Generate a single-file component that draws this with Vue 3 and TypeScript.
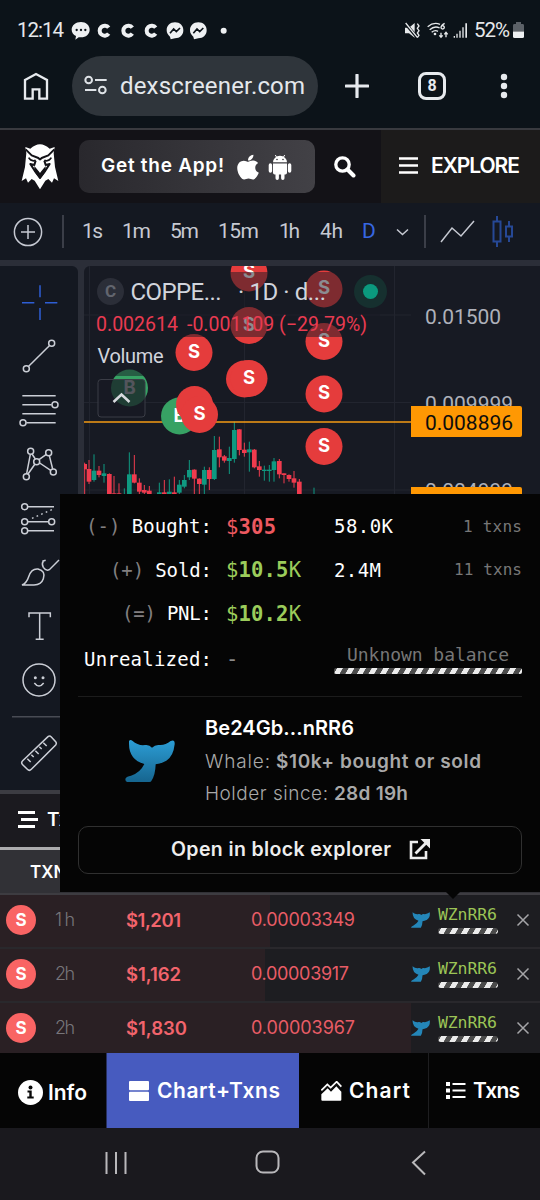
<script setup lang="ts">
import type { Directive } from 'vue'

// Adjusts tracking so that a label fills the given width in pixels.
const vFit: Directive<HTMLElement, number> = {
  mounted(el, { value }) {
    const count = (el.textContent ?? '').length
    if (count < 2) return
    const spacing = (value - el.getBoundingClientRect().width) / (count - 1)
    el.style.letterSpacing = `${spacing}px`
    el.style.marginRight = `${-spacing}px`
  },
}

interface Trade { age: string; usd: string; usdWidth: number; price: string; priceWidth: number; fill: number }
const trades: Trade[] = [
  { age: '1h', usd: '$1,201', usdWidth: 55, price: '0.00003349', priceWidth: 104, fill: 270 },
  { age: '2h', usd: '$1,162', usdWidth: 55, price: '0.00003917', priceWidth: 98, fill: 265 },
  { age: '2h', usd: '$1,830', usdWidth: 61, price: '0.00003967', priceWidth: 104, fill: 411 },
]

const intervals = [
  { label: '1s', width: 21, gap: 19 },
  { label: '1m', width: 29, gap: 19 },
  { label: '5m', width: 29, gap: 19 },
  { label: '15m', width: 41, gap: 20 },
  { label: '1h', width: 21, gap: 20 },
  { label: '4h', width: 23, gap: 19 },
]

// Candles: x, high, low, body top, body bottom, rising
type Candle = [number, number, number, number, number, boolean]
const candles: Candle[] = [
  [254, 608, 705, 612, 628, false], [267, 600, 672, 627, 665, false], [282, 583, 665, 632, 660, true],
  [297, 618, 652, 632, 645, false], [312, 612, 668, 640, 648, true], [328, 640, 705, 642, 705, false],
  [342, 648, 705, 700, 705, false], [357, 670, 705, 700, 705, false], [373, 685, 705, 703, 705, true],
  [388, 577, 705, 643, 705, true], [403, 585, 670, 643, 668, false], [418, 655, 705, 668, 695, false],
  [433, 675, 705, 690, 698, false], [448, 678, 705, 692, 705, false], [478, 668, 705, 697, 705, true],
  [493, 660, 705, 697, 702, false], [508, 658, 705, 695, 702, true], [523, 650, 705, 697, 702, false],
  [538, 660, 705, 674, 698, true], [553, 645, 685, 660, 680, true], [568, 600, 660, 630, 652, true],
  [583, 628, 705, 629, 656, false], [598, 655, 705, 656, 672, false], [613, 620, 705, 630, 674, true],
  [628, 622, 690, 630, 657, false], [643, 528, 660, 570, 657, true], [658, 530, 622, 568, 592, false],
  [673, 585, 608, 589, 602, false], [688, 560, 642, 594, 603, true], [703, 485, 608, 510, 597, true],
  [718, 507, 586, 508, 570, false], [733, 548, 590, 569, 579, false], [748, 545, 635, 568, 577, true],
  [763, 567, 625, 569, 622, false], [778, 603, 650, 619, 630, false], [793, 617, 662, 629, 633, true],
  [808, 615, 665, 629, 633, true], [822, 594, 665, 604, 630, true], [838, 597, 655, 603, 643, false],
  [852, 640, 670, 640, 645, false], [867, 643, 665, 645, 657, false], [882, 633, 683, 655, 668, false],
  [898, 657, 705, 665, 705, false], [942, 683, 705, 703, 705, true],
]

const sells = [
  [249, 273], [249, 325.5], [194, 352.5], [249, 378.5],
  [324, 289], [324, 341.5], [324, 394], [324, 446.5],
]
</script>

<template>
  <div class="phone">
    <header class="browser">
      <div class="status">
        <span v-fit="47" class="clock">12:14</span>
        <svg class="notices" width="160" height="24" viewBox="210 57 480 72">
          <g fill="#eef0f2">
            <path d="M243 66c15 0 26 10 26 23s-11 23-26 23l-7 0-10 7 2-11c-8-4-13-11-13-19 0-13 12-23 28-23z" />
            <path d="M525 67c15 0 25 10 25 24s-10 24-25 24l-13 3-2-8c-6-5-10-11-10-19 0-14 10-24 25-24zM595 67c15 0 25 10 25 24s-10 24-25 24l-13 3-2-8c-6-5-10-11-10-19 0-14 10-24 25-24z" />
            <circle cx="671" cy="92" r="9" />
          </g>
          <g fill="#0c1319"><circle cx="230" cy="90" r="3.5" /><circle cx="243" cy="90" r="3.5" /><circle cx="256" cy="90" r="3.5" /></g>
          <g fill="none" stroke="#eef0f2" stroke-width="12">
            <path d="M326 83a15 15 0 1 0 0 18M397 83a15 15 0 1 0 0 18M467 83a15 15 0 1 0 0 18" />
          </g>
          <path d="M510 100l11-13 8 8 11-11M580 100l11-13 8 8 11-11" fill="none" stroke="#0c1319" stroke-width="5" />
        </svg>
        <svg class="signals" width="66" height="24" viewBox="402 57 198 72">
          <g fill="#e6e8ea">
            <path d="M405 83h12l17-14v44l-17-13h-12z" />
            <path d="M551 108h4v5h-4zM559 101h4v12h-4zM568 92h4v21h-4zM577 82h4v31h-4zM586 70h5v43h-5z" />
          </g>
          <path d="M407 71l35 42" stroke="#0c1319" stroke-width="9" />
          <path d="M407 69l35 43M442 71l5 7-5 7 5 7-5 7 5 7-5 7" fill="none" stroke="#e6e8ea" stroke-width="4" />
          <g fill="none" stroke="#e6e8ea" stroke-width="4">
            <path d="M473 80q18-15 37-7M479 89q15-13 30-5M485 97q10-8 19-3M513 98v13m-5-5l5 6 5-6M528 112V98m-5 5l5-6 5 6" />
            <path d="M524 70q-11 5-11 13a5 5 0 1 0 2-5" />
          </g>
          <circle cx="495" cy="102" r="4" fill="#e6e8ea" />
        </svg>
        <span v-fit="36" class="battery-text">52%</span>
        <svg class="battery" width="12" height="17" viewBox="0 0 12 17">
          <path d="M3 0h5v2h2q1 0 1 1.500v6H0v-6Q0 2 1 2h2z" fill="#5c6167" />
          <path d="M0 9.500h11v5q0 1.500-1.500 1.500h-8Q0 16 0 14.500z" fill="#eef0f2" />
        </svg>
      </div>
      <div class="address">
        <svg class="home" width="28" height="30" viewBox="66 213 84 90">
          <path d="M75 240l33-18 33 18v56h-23v-28H98v28H75z" fill="none" stroke="#e7eaee" stroke-width="7" />
        </svg>
        <div class="omnibox">
          <svg width="24" height="22" viewBox="253 227 72 66">
            <g fill="none" stroke="#dfe3e7" stroke-width="6">
              <circle cx="267" cy="242" r="10" /><circle cx="308" cy="272" r="10" />
              <path d="M286 242h35M256 272h34" />
            </g>
          </svg>
          <span v-fit="185" class="url">dexscreener.com</span>
        </div>
        <svg class="plus" width="24" height="24" viewBox="0 0 24 24"><path d="M12 1v22M1 12h22" stroke="#e7eaee" stroke-width="3.200" stroke-linecap="round" /></svg>
        <div class="tab-count">8</div>
        <svg class="kebab" width="8" height="26" viewBox="0 0 8 26" fill="#e7eaee"><circle cx="4" cy="4" r="3.200" /><circle cx="4" cy="13" r="3.200" /><circle cx="4" cy="22" r="3.200" /></svg>
      </div>
    </header>

    <div class="site">
      <svg class="owl" width="38" height="46" viewBox="65 62 114 138">
        <path fill="#fff" d="M78 71l15 5q29-27 58 0l15-5-3 18 4 42 10 42-13-8-6 13-11-11-9 5-16 26-16-26-9-5-11 11-6-13-13 8 10-42 4-42z" />
        <g fill="none" stroke="#131217" stroke-width="6" stroke-linejoin="round">
          <path d="M79 78l18 18 20 8 5 5 5-5 20-8 18-18" />
          <path d="M88 103q8 13 21 8M156 103q-8 13-21 8" stroke-width="5" />
          <path d="M109 112l-4 13-12-3 13 20 16 22 16-22 13-20-12 3-4-13" />
        </g>
        <path d="M105 128l17 20 17-20v17l-17 22-17-22z" fill="#131217" />
        <path d="M122 110l10 19-10 19-10-19z" fill="#fff" />
      </svg>
      <div class="app-button">
        <span v-fit="123">Get the App!</span>
        <svg width="22" height="26" viewBox="0 20 384 470" preserveAspectRatio="none"><path fill="#fff" d="M318.700 268.700c-.2-36.700 16.400-64.400 50-84.800-18.800-26.900-47.200-41.700-84.700-44.600-35.500-2.800-74.300 20.700-88.500 20.700-15 0-49.400-19.700-76.400-19.700C63.300 141.200 4 184.800 4 273.500q0 39.300 14.400 81.200c12.800 36.700 59 126.700 107.200 125.200 25.200-.6 43-17.900 75.800-17.900 31.800 0 48.300 17.900 76.400 17.900 48.600-.7 90.400-82.500 102.600-119.300-65.200-30.700-61.700-90-61.700-91.900zm-56.600-164.200c27.300-32.400 24.800-61.900 24-72.500-24.100 1.400-52 16.400-67.900 34.900-17.500 19.800-27.800 44.300-25.600 71.900 26.100 2 49.900-11.400 69.500-34.300z" /></svg>
        <svg class="droid" width="24" height="26" viewBox="0 0 24 26" fill="#fff">
          <path d="M5 8.300A7 6.600 0 0 1 19 8.300zM5 9.500h14v9.300q0 1.700-1.700 1.700H6.700Q5 20.500 5 18.800z" />
          <path d="M2.400 11v6M21.600 11v6M9.200 20v4.200M14.800 20v4.200" stroke="#fff" stroke-width="3.400" stroke-linecap="round" />
          <path d="M8.500 3L7.300 1M15.500 3l1.200-2" stroke="#fff" /><circle cx="9" cy="5.500" r=".8" fill="#39383d" /><circle cx="15" cy="5.500" r=".8" fill="#39383d" />
        </svg>
      </div>
      <svg class="search" width="22" height="22" viewBox="0 0 22 22"><circle cx="8.500" cy="8.500" r="6.700" fill="none" stroke="#fff" stroke-width="3.300" /><path d="M13.500 13.500l6 6" stroke="#fff" stroke-width="4" stroke-linecap="round" /></svg>
      <div class="explore">
        <svg width="19" height="17" viewBox="0 0 19 17"><path d="M0 1.500h19M0 8.500h19M0 15.500h19" stroke="#fff" stroke-width="2.600" /></svg>
        <span v-fit="89">EXPLORE</span>
      </div>
    </div>

    <nav class="intervals">
      <svg class="add" width="30" height="30" viewBox="0 0 30 30"><circle cx="15" cy="15" r="13.600" /><path d="M15 8v14M8 15h14" /></svg>
      <i class="rule"></i>
      <span v-for="i in intervals" :key="i.label" class="slot" :style="{ width: `${i.width + i.gap}px` }"><span v-fit="i.width">{{ i.label }}</span></span>
      <span class="day">D</span>
      <svg class="chevron" width="13" height="8" viewBox="0 0 13 8"><path d="M1 1.500l5.500 5 5.500-5" /></svg>
      <i class="rule second"></i>
      <svg class="zig" width="35" height="24" viewBox="0 0 35 24"><path d="M1 22L12 8l9 8L34 1" /></svg>
      <svg class="sticks" width="22" height="31" viewBox="0 0 22 31"><path d="M5 0v5M5 26v5M1.500 5.500h7v20h-7zM17 5v5M17 21v5M14 10.500h6v10h-6z" /></svg>
    </nav>

    <main class="work">
      <aside class="tools">
        <svg width="78" height="63" viewBox="0 18 234 189"><path d="M120 76v36M120 144v36M66 128h37M135 128h37" class="blue" /></svg>
        <svg width="78" height="54" viewBox="0 207 234 162"><circle cx="155" cy="250" r="9" /><circle cx="79" cy="326" r="9" /><path d="M148 257l-62 62" /></svg>
        <svg width="78" height="54" viewBox="0 369 234 162"><path d="M67 407h100M67 434h88M67 461h100M79 488h88" /><circle cx="165" cy="434" r="9" /><circle cx="69" cy="488" r="9" /></svg>
        <svg width="78" height="54" viewBox="0 531 234 162"><circle cx="92" cy="574" r="9" /><circle cx="146" cy="578" r="9" /><circle cx="110" cy="605" r="9" /><circle cx="79" cy="650" r="9" /><circle cx="160" cy="636" r="9" /><path d="M91 583l-11 58M84 642l21-30M96 582l10 15M117 599l22-16M119 609l33 22M148 587l10 40" /></svg>
        <svg width="78" height="54" viewBox="0 33 234 162"><circle cx="74" cy="80" r="9" /><circle cx="74" cy="125" r="9" /><circle cx="155" cy="125" r="9" /><circle cx="74" cy="152" r="9" /><path d="M83 80h79M83 125h63M83 152h79" /><path d="M96 115l64-28" stroke-dasharray="5 10" /></svg>
        <svg width="78" height="55" viewBox="0 195 234 165"><path d="M66 315q14-6 20-25 8-25 28-23 24 6 16 29-6 18-28 19zM130 243q-6 9 0 19 8 12 18 7l29-29M127 244l10-3" /></svg>
        <svg width="78" height="54" viewBox="0 360 234 162"><path d="M87 412v-13h64v13M119 399v78M107 478h24" /></svg>
        <svg width="78" height="56" viewBox="0 522 234 168"><circle cx="117" cy="600" r="48" /><path d="M103 609q14 18 28 0" /><g class="dots"><circle cx="106" cy="593" r="4.500" /><circle cx="129" cy="593" r="4.500" /></g></svg>
        <svg width="78" height="80" viewBox="0 60 234 240"><path d="M36 80h198" class="faint" /><path d="M144 140q5-4 10 1l13 14q4 5 0 10l-73 73q-6 6-12 0l-14-14q-6-6 0-12zM82 206l10 10M94 194l7 7M106 182l10 10M118 170l7 7M130 158l10 10" /></svg>
      </aside>
      <section class="chart">
        <svg width="456" height="228" viewBox="84 266 456 228">
          <path d="M89.500 266v228M244.500 266v228M394.500 266v228M84 315h327M84 402.500h327M84 490h327" stroke="#22252f" />
          <g transform="translate(0 260) scale(.33333)">
            <g v-for="c in candles" :key="c[0]" :fill="c[5] ? '#0f9981' : '#f03b4e'">
              <rect :x="c[0] - 1.500" :y="c[1]" width="3" :height="c[2] - c[1]" />
              <rect :x="c[0] - 7" :y="c[3]" width="14" :height="c[4] - c[3]" />
            </g>
          </g>
          <path d="M84 422h327" stroke="#f49b14" stroke-width="1.500" />
          <circle cx="129.500" cy="388" r="18.500" fill="#37a264" />
          <text x="129.500" y="394" class="mark">B</text>
          <circle cx="179.500" cy="416" r="18.500" fill="#37a264" />
          <text x="179.500" y="422" class="mark">B</text>
          <circle cx="194.500" cy="404.500" r="18.500" fill="#e53c3c" />
          <circle cx="199.500" cy="414.500" r="18.500" fill="#e53c3c" />
          <text x="199.500" y="420" class="mark">S</text>
          <circle cx="244.500" cy="379" r="18.500" fill="#e53c3c" />
          <g v-for="(s, n) in sells" :key="n">
            <circle :cx="s[0]" :cy="s[1]" r="18.500" fill="#e53c3c" />
            <text :x="s[0]" :y="s[1] + 5" class="mark">S</text>
          </g>
          <path d="M98 272h282v65H166v39H98z" fill="#171a23" opacity=".5" />
          <rect x="98" y="379.500" width="47" height="37.500" rx="3" fill="#171a23" fill-opacity=".74" stroke="#3b3d46" />
          <path d="M113.500 402l8-7.500 8 7.500" fill="none" stroke="#d7d9de" stroke-width="2.500" />
          <circle cx="110.500" cy="291.500" r="13.500" fill="#2b2e38" />
          <text x="110.500" y="297" class="coin">C</text>
          <g fill="#d1d4dc" font-size="24">
            <text x="130.500" y="300" textLength="91">COPPE...</text>
            <text x="238" y="300" textLength="88">· 1D · d...</text>
          </g>
          <g fill="#e93b51" font-size="19.500">
            <text x="96" y="330.500" textLength="82">0.002614</text>
            <text x="187" y="330.500" textLength="180">-0.001109 (−29.79%)</text>
          </g>
          <text x="97.500" y="363" font-size="20" fill="#d1d4dc" textLength="66">Volume</text>
          <circle cx="370.500" cy="291.500" r="16.500" fill="#16302f" /><circle cx="370.500" cy="291.500" r="7.500" fill="#0b9a7e" />
          <g font-size="21" fill="#aeb1ba">
            <text x="425" y="323.500" textLength="76">0.01500</text>
            <text x="425" y="410.500" textLength="88">0.009999</text>
            <text x="425" y="498" textLength="88">0.004999</text>
          </g>
          <path d="M411 406h109q2 0 2 2v27q0 2-2 2H411zM411 487h109q2 0 2 2v5H411z" fill="#ff9803" />
          <text x="425" y="430" font-size="21" fill="#0d0d0d" textLength="88">0.008896</text>
        </svg>
      </section>
    </main>

    <section class="txn-tab">
      <svg width="20" height="17" viewBox="0 0 20 17"><path d="M0 1.500h17M3 8.500h17M0 15.500h17" stroke="#fff" stroke-width="3" /></svg>
      <span>Txns</span>
    </section>
    <div class="txn-head">TXN</div>
    <section class="trades">
      <div v-for="t in trades" :key="t.usd" class="trade">
        <i class="fill" :style="{ width: `${t.fill}px` }"></i>
        <span class="badge">S</span>
        <span class="age"><span v-fit="20">{{ t.age }}</span></span>
        <span class="usd"><span v-fit="t.usdWidth">{{ t.usd }}</span></span>
        <span class="price"><span v-fit="t.priceWidth">{{ t.price }}</span></span>
        <svg class="fluke" width="19" height="16" viewBox="375 150 150 130" preserveAspectRatio="none"><path d="M387 153q24 20 48 14 13-2 21 8 9-9 21-8 24 3 46-14 6 44-24 61-19 8-33 11-1 33-13 52h-77q-1-9 19-18 30-16 39-37-47-13-47-69z" fill="#2486b8" /></svg>
        <div class="wallet"><span v-fit="59">WZnRR6</span><i class="stripe"></i></div>
        <svg class="close" width="14" height="14" viewBox="0 0 14 14"><path d="M1.500 1.500l11 11m0-11l-11 11" stroke="#a5a5a8" stroke-width="1.500" /></svg>
      </div>
    </section>

    <nav class="views">
      <div class="view info">
        <svg width="25" height="25" viewBox="0 0 25 25"><circle cx="12.500" cy="12.500" r="12.500" fill="#fff" /><path d="M9.500 10.500h4.200v6h2v2H9.300v-2h2v-4H9.500z" fill="#080808" /><circle cx="12.500" cy="7.500" r="2" fill="#080808" /></svg>
        <span v-fit="39">Info</span>
      </div>
      <div class="view active">
        <svg width="20" height="20" viewBox="0 0 20 20" fill="#fff"><rect width="20" height="9.200" rx="1" /><rect y="10.800" width="20" height="9.200" rx="1" /></svg>
        <span v-fit="123">Chart+Txns</span>
      </div>
      <div class="view charted">
        <svg width="21" height="20" viewBox="154 601 63 60"><path d="M155 657v-16l19-18 10 10 16-16 15 16v24q0 3-3 3h-54q-3 0-3-3z" fill="#fff" /><path d="M155 631l18-18 10 10 18-18 14 15" fill="none" stroke="#131313" stroke-width="10" /><path d="M155 629l18-18 10 10 18-18 14 15" fill="none" stroke="#fff" stroke-width="5" /></svg>
        <span v-fit="61">Chart</span>
      </div>
      <div class="view list">
        <svg width="20" height="17" viewBox="0 0 20 17" fill="#fff"><path d="M0 0h4v4H0zM0 6.500h4v4H0zM0 13h4v4H0zM6.500 1h13v2h-13zM6.500 7.500h13v2h-13zM6.500 14h13v2h-13z" /></svg>
        <span v-fit="47">Txns</span>
      </div>
    </nav>
    <footer class="system">
      <svg width="22" height="24" viewBox="0 0 22 24"><path d="M1.500 1v22M11 1v22M20.500 1v22" /></svg>
      <svg width="25" height="25" viewBox="0 0 25 25"><rect x="1.500" y="1.500" width="22" height="21" rx="6.500" /></svg>
      <svg width="15" height="26" viewBox="0 0 15 26"><path d="M14 1.500L2 12.500l12 12" /></svg>
    </footer>

    <aside class="popup">
      <div class="line l1"><span class="name"><span v-fit="126"><em>(-)</em> Bought:</span></span><span class="value red"><span v-fit="50">$<b>305</b></span></span><span class="amount"><span v-fit="59">58.0K</span></span><span class="count" v-fit="59">1 txns</span></div>
      <div class="line l2"><span class="name"><span v-fit="102"><em>(+)</em> Sold:</span></span><span class="value green"><span v-fit="75">$<b>10.5</b>K</span></span><span class="amount"><span v-fit="47">2.4M</span></span><span class="count" v-fit="68">11 txns</span></div>
      <div class="line l3"><span class="name"><span v-fit="90"><em>(=)</em> PNL:</span></span><span class="value green"><span v-fit="75">$<b>10.2</b>K</span></span></div>
      <div class="line l4"><span class="name"><span v-fit="128">Unrealized:</span></span><span class="value dash">-</span><div class="balance"><span v-fit="162">Unknown balance</span><i class="stripe"></i></div></div>
      <div class="holder">
        <svg width="50" height="44" viewBox="375 149 150 132">
          <defs><linearGradient id="sea" x1="0" y1="0" x2="0" y2="1"><stop offset="0" stop-color="#2c9ed6" /><stop offset="1" stop-color="#16658f" /></linearGradient></defs>
          <path d="M387 155q4-6 10-1 18 16 38 13 13-2 21 8 9-9 21-8 18 2 35-12 13-6 12 10-4 37-25 49-16 9-32 11-1 33-13 50-1 3-6 3h-66q-8-2-5-11 3-6 16-8 28-9 40-35-46-13-46-61z" fill="url(#sea)" />
        </svg>
        <div class="facts">
          <strong v-fit="149">Be24Gb...nRR6</strong>
          <div><span v-fit="65">Whale:</span> <b v-fit="205">$10k+ bought or sold</b></div>
          <div><span v-fit="123">Holder since:</span> <b v-fit="74">28d 19h</b></div>
        </div>
      </div>
      <div class="explorer">
        <span v-fit="220">Open in block explorer</span>
        <svg width="21" height="21" viewBox="0 0 21 21"><path d="M9 3H2v16h15v-7" fill="none" stroke="#eee" stroke-width="2.600" /><path d="M6.500 14.500L18 3" stroke="#eee" stroke-width="2.800" /><path d="M11.500 0H21v9.500z" fill="#eee" /></svg>
      </div>
      <i class="pointer"></i>
    </aside>
  </div>
</template>

<style>
html, body { background: #1a191e; }
</style>

<style scoped>
.phone { position: relative; width: 540px; height: 1200px; overflow: hidden; font-family: Inter, sans-serif; color: #fff; background: #1a191e; line-height: 1; }
.phone * { box-sizing: border-box; }
span, b, strong { white-space: nowrap; }
svg { display: block; flex: none; }
svg text { font-family: Roboto, sans-serif; }
.browser { height: 128px; background: #0c1319; }
.status { height: 42px; display: flex; padding: 19px 0 0 17px; font-family: Roboto, sans-serif; font-size: 20.500px; color: #e6e8ea; align-items: center; }
.clock, .battery-text { flex: none; }
.notices { margin-left: 6px; }
.signals { margin-left: 174px; }
.battery-text { margin-left: 4px; }
.battery { margin-left: 3px; }
.address { height: 86px; display: flex; align-items: center; padding: 2px 0 0 22px; }
.omnibox { width: 246px; height: 60px; margin-left: 22px; border-radius: 30px; background: #2f353b; display: flex; align-items: center; padding-left: 12px; gap: 12px; }
.url { font: 24px/1 Roboto, sans-serif; color: #e4e8ec; }
.plus { margin-left: 27px; }
.tab-count { width: 28px; height: 28px; margin-left: 49px; border: 3px solid #e7eaee; border-radius: 8px; font: bold 16px/22px Roboto, sans-serif; color: #e7eaee; text-align: center; }
.kebab { margin-left: 54px; }
.site { height: 75px; border-top: 2px solid #393a3f; background: #131217; display: flex; align-items: center; padding-left: 21px; }
.app-button { width: 236px; height: 53px; margin-left: 20px; border-radius: 10px; background: linear-gradient(90deg, #29282d, #424146); display: flex; align-items: center; padding-left: 22px; font-size: 19px; font-weight: 600; }
.app-button span { margin-top: -2px; }
.app-button svg { margin: 0 0 0 13px; }
.app-button .droid { margin: 0 0 0 9px; }
.search { margin-left: 19px; }
.explore { width: 159px; height: 73px; margin-left: auto; background: #1c1b1b; display: flex; align-items: center; padding: 0 0 2px 18px; gap: 13px; font-size: 21px; font-weight: 600; }
.intervals { height: 57px; background: #141821; display: flex; align-items: center; padding-left: 13px; font: 21px/1 Roboto, sans-serif; color: #c6c9d2; }
.intervals svg { fill: none; stroke: #c6c9d2; stroke-width: 1.500; }
.rule { width: 2px; height: 33px; margin: 0 18px 0 19px; background: #3b3e48; flex: none; }
.slot { flex: none; }
.day { width: 14px; color: #3767e3; flex: none; }
.intervals .chevron { margin-left: 20px; }
.rule.second { margin: 0 14px 0 15px; }
.intervals .sticks { margin-left: 17px; stroke: #264896; stroke-width: 2; }
.work { height: 530px; padding-top: 6px; background: #2b2e38; display: flex; gap: 6px; }
.tools { width: 78px; height: 524px; background: #141821; border-radius: 0 6px 0 0; }
.tools svg { fill: none; stroke: #cbced6; stroke-width: 4.500; }
.tools .blue { stroke: #2e5ed5; }
.tools .faint { stroke: #484b54; }
.tools .dots { fill: #cbced6; stroke: none; }
.chart { width: 456px; height: 524px; background: #171a23; border-radius: 6px 0 0; overflow: hidden; }
.mark { font-weight: 700; fill: #fff; text-anchor: middle; font-family: Inter, sans-serif; font-size: 18.500px; }
.coin { font-size: 17px; font-weight: 700; fill: #62656e; text-anchor: middle; }
.txn-tab { height: 60px; background: #1b1a1f; border-top: 4px solid #3c3c42; border-bottom: 3px solid #acacae; display: flex; align-items: center; padding: 0 0 2px 18px; gap: 9px; font-size: 19px; font-weight: 600; }
.txn-head { height: 45px; background: #313136; border-bottom: 2px solid #3d3c41; padding: 14px 0 0 30px; font-size: 17px; font-weight: 600; }
.trades { height: 158px; overflow: hidden; background: #1d1d21; }
.trade { position: relative; height: 54px; padding: 0 0 2px 6px; display: flex; align-items: center; border-bottom: 2px solid #29282c; }
.trade > * { position: relative; flex: none; }
.trade > .fill { position: absolute; left: 0; top: 0; bottom: 0; background: #2a2024; }
.badge { width: 30px; height: 30px; border-radius: 50%; background: #f96464; font-size: 17px; line-height: 30px; font-weight: 700; text-align: center; }
.age { width: 71px; margin-left: 19px; font-size: 18px; color: #77757a; font-weight: 300; }
.usd { width: 125px; font-size: 18.500px; font-weight: 600; color: #f2646c; }
.price { width: 160px; font-size: 18px; color: #e85c66; }
.wallet { width: 60px; margin: 1px 0 0 8px; font: 16.500px/1 "DejaVu Sans Mono", monospace; color: #9bc456; }
.stripe { display: block; height: 6px; border-radius: 3px; background: repeating-linear-gradient(120deg, #4b4b4b 0 2.500px, #ececec 3px 7.500px, #4b4b4b 8px 10px); }
.wallet .stripe { margin-top: 4px; }
.close { margin-left: 18px; }
.views { height: 75px; display: flex; background: #050505; }
.view { display: flex; align-items: center; font-size: 21px; font-weight: 600; }
.info { width: 106px; padding: 3px 0 0 18px; gap: 5px; }
.active { width: 193px; padding-left: 22px; gap: 8px; background: #475bbf; border-left: 1px solid #27305e; }
.charted { width: 130px; padding-left: 22px; gap: 7px; border-right: 1px solid #1e1e20; }
.list { padding-left: 17px; gap: 7px; }
.system { height: 72px; display: flex; align-items: center; padding: 0 0 3px 105px; background: #1a191e; }
.system svg { fill: none; stroke: #b9b8bb; stroke-width: 2; }
.system svg + svg { margin-left: 128px; }
.system svg + svg + svg { margin-left: 131px; }
.popup { position: absolute; left: 60px; top: 493.500px; width: 480px; height: 398.500px; padding: 11.500px 18px 0; background: #050505; }
.line { display: flex; align-items: center; height: 43.500px; font: 19px/1 "DejaVu Sans Mono", monospace; }
.l4 { height: 48px; }
.name { width: 134px; display: flex; justify-content: flex-end; }
.name em { font-style: normal; color: #817f80; }
.value { width: 108px; margin-left: 14px; font-size: 20.500px; }
.red { color: #ed5960; }
.green { color: #9bcc5b; }
.dash { color: #8b8b8b; }
.amount { width: 100px; }
.count { margin-left: auto; color: #777; font-size: 16px; }
.balance { width: 188px; padding-top: 1px; font-size: 18px; color: #777; text-align: center; }
.balance .stripe { margin-top: 4px; border-radius: 2px; }
.holder { height: 130px; border-top: 1px solid #1c1c1c; margin-top: 12px; display: flex; padding: 19px 0 0 47px; }
.holder svg { margin-top: 23px; }
.facts { margin-left: 30px; font-size: 19px; color: #a9a9a9; }
.facts strong { display: inline-block; height: 30px; color: #fff; font-size: 20px; font-weight: 600; padding-top: 2px; }
.facts div { height: 32px; padding-top: 6px; display: flex; gap: 6px; font-weight: 300; }
.facts b { font-weight: 600; }
.explorer { height: 48px; border: 1px solid #303030; border-radius: 10px; display: flex; align-items: center; padding-left: 92px; gap: 18px; font-size: 19.500px; font-weight: 600; color: #eee; }
.pointer { position: absolute; left: 386px; top: 398px; border: 7px solid transparent; border-top-color: #050505; border-bottom: 0; }
</style>
